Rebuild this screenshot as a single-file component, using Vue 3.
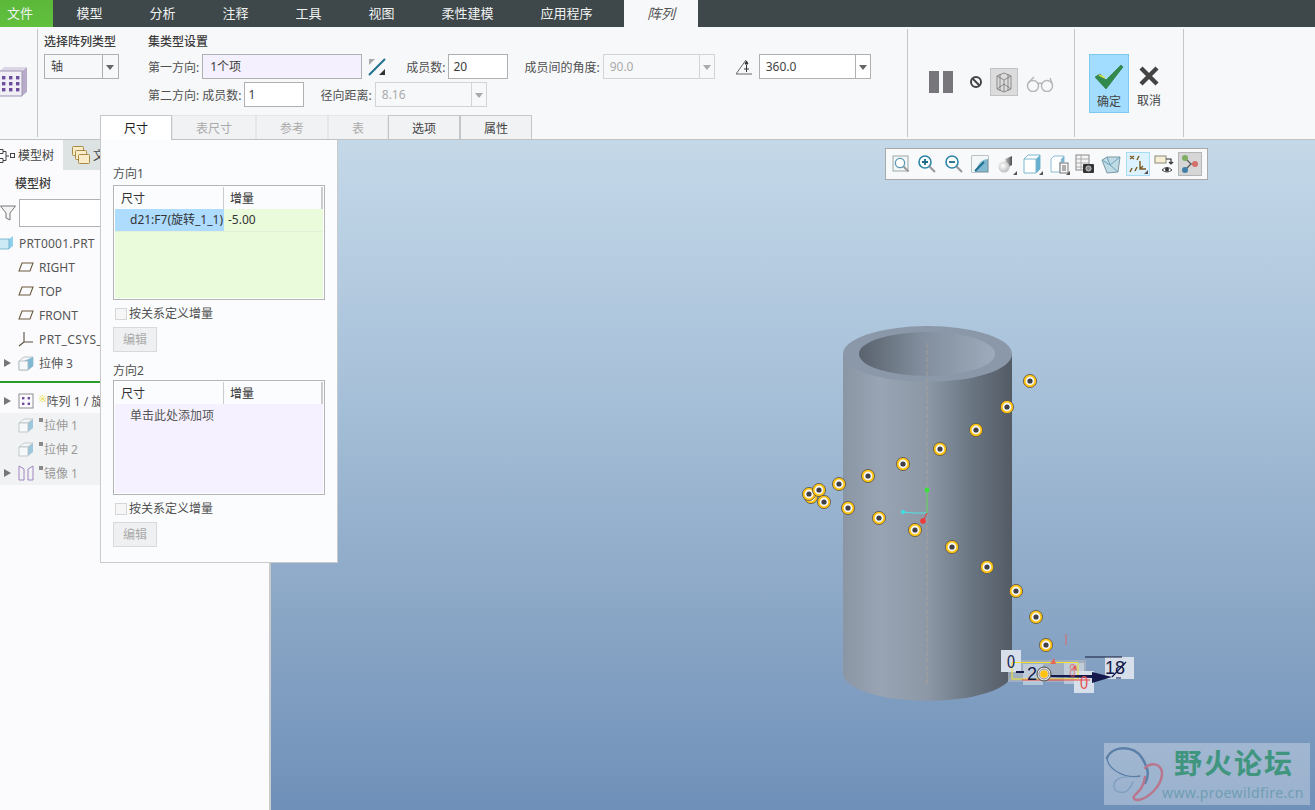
<script setup>
const tabs = ['模型', '分析', '注释', '工具', '视图', '柔性建模', '应用程序']

const panelTabs = [
  { name: '尺寸', active: true, w: 72 },
  { name: '表尺寸', off: true, w: 84 },
  { name: '参考', off: true, w: 72 },
  { name: '表', off: true, w: 60 },
  { name: '选项', w: 72 },
  { name: '属性', w: 72 },
]

const treeTop = [
  { text: 'RIGHT', icon: 'plane' },
  { text: 'TOP', icon: 'plane' },
  { text: 'FRONT', icon: 'plane' },
  { text: 'PRT_CSYS_DEF', icon: 'csys', wide: true },
  { text: '拉伸 3', icon: 'cube', arrow: true },
]

const treeBottom = [
  { text: '拉伸 1', icon: 'cube', mark: true },
  { text: '拉伸 2', icon: 'cube', mark: true },
  { text: '镜像 1', icon: 'mirror', mark: true, arrow: true },
]

// 阵列成员在视图里的位置
const dots = [
  [811, 497], [809, 494], [819, 490], [824, 502], [839, 484], [848, 508], [868, 476],
  [879, 518], [903, 464], [915, 530], [940, 449], [952, 547], [976, 430], [987, 567],
  [1007, 407], [1016, 591], [1030, 381], [1036, 617], [1046, 645],
]
</script>

<template>
  <div class="app">
    <nav class="topbar">
      <div class="tab-file">文件</div>
      <div v-for="t in tabs" :key="t" class="tab">{{ t }}</div>
      <div class="tab-active">阵列</div>
    </nav>

    <section class="ribbon">
      <div class="g-icon">
        <svg width="28" height="32" viewBox="0 0 28 32">
          <path d="M22 5L27 1V26L22 30Z" fill="#b7abc9" />
          <path d="M0 5L4 1H27L22 5Z" fill="#dcd7e6" />
          <path d="M0 5H22V30H0" fill="#f1eff6" stroke="#9d93b0" />
          <g fill="#6d4d9c">
            <rect x="2" y="10" width="3.4" height="3.4" /><rect x="9" y="10" width="3.4" height="3.4" /><rect x="16" y="10" width="3.4" height="3.4" />
            <rect x="2" y="16" width="3.4" height="3.4" /><rect x="9" y="16" width="3.4" height="3.4" /><rect x="16" y="16" width="3.4" height="3.4" />
            <rect x="2" y="22" width="3.4" height="3.4" /><rect x="9" y="22" width="3.4" height="3.4" /><rect x="16" y="22" width="3.4" height="3.4" />
          </g>
        </svg>
      </div>

      <div class="ribbon-main">
        <div class="fields">
          <div class="g-type">
            <div class="g-title">选择阵列类型</div>
            <div class="select sel-type">
              <span class="sel-val">轴</span>
              <span class="sel-arrow"></span>
            </div>
          </div>
          <div class="g-set">
            <div class="g-title">集类型设置</div>
            <div class="row">
              <label class="lbl">第一方向:</label>
              <div class="input in-first">1个项</div>
              <svg class="flip" width="18" height="20" viewBox="0 0 18 20">
                <path d="M1 18L17 2" stroke="#1f6f8f" stroke-width="2" fill="none" />
                <path d="M1 2H7L1 8Z" fill="#a9a9a9" />
                <path d="M17 18H11L17 12Z" fill="#333" />
              </svg>
              <label class="lbl lbl-count">成员数:</label>
              <div class="input in-num">20</div>
              <label class="lbl lbl-ang">成员间的角度:</label>
              <div class="select sel-ang off">
                <span class="sel-val">90.0</span>
                <span class="sel-arrow"></span>
              </div>
              <svg class="ang-icon" width="18" height="20" viewBox="0 0 18 20">
                <path d="M0 17H16M0 17L10 3" stroke="#666" fill="none" />
                <path d="M9 7L12 7L10.5 4Z M10.500 8V15M8 12H13" stroke="#333" fill="#333" stroke-width="1" />
              </svg>
              <div class="select sel-360">
                <span class="sel-val">360.0</span>
                <span class="sel-arrow"></span>
              </div>
            </div>
            <div class="row row2">
              <label class="lbl">第二方向: 成员数:</label>
              <div class="input in-num second-num">1</div>
              <label class="lbl lbl-rad">径向距离:</label>
              <div class="select sel-ang off">
                <span class="sel-val">8.16</span>
                <span class="sel-arrow"></span>
              </div>
            </div>
          </div>
        </div>
        <div class="ptabs">
          <div
            v-for="p in panelTabs"
            :key="p.name"
            class="ptab"
            :class="{ active: p.active, off: p.off }"
            :style="{ width: p.w + 'px' }"
          >{{ p.name }}</div>
        </div>
      </div>

      <div class="g-view">
        <svg width="24" height="22" viewBox="0 0 24 22">
          <rect x="0" y="0" width="10" height="22" fill="#77777b" />
          <rect x="14" y="0" width="10" height="22" fill="#77777b" />
        </svg>
        <svg class="no-icon" width="14" height="14" viewBox="0 0 14 14">
          <circle cx="7" cy="7" r="5" fill="none" stroke="#444" stroke-width="2" />
          <path d="M3.5 3.5L10.5 10.5" stroke="#444" stroke-width="2" />
        </svg>
        <div class="wire-btn">
          <svg width="22" height="22" viewBox="0 0 22 22">
            <g fill="none" stroke="#777" stroke-width="0.8">
              <path d="M4 5L11 2L18 5V18L11 21L4 18Z" />
              <path d="M4 5L11 9L18 5M11 9V21M4 18L11 13L18 18M7 3V20M15 3V20" />
            </g>
          </svg>
        </div>
        <svg class="glasses" width="28" height="16" viewBox="0 0 28 16">
          <g fill="none" stroke="#b5b5b5" stroke-width="1.4">
            <circle cx="7" cy="10" r="5.5" />
            <circle cx="21" cy="10" r="5.5" />
            <path d="M12 8Q14 6 16 8M2 7L8 1M26 7L24 2" />
          </g>
        </svg>
      </div>

      <div class="g-ok">
        <div class="ok-btn">
          <svg width="30" height="26" viewBox="0 0 30 26">
            <path d="M1 13L6 10L12 16L27 1L29 3L12 25Z" fill="#2f8a4c" stroke="#2e6b33" stroke-width="0.6" />
            <path d="M5 11L11 14" stroke="#d6e04a" stroke-width="1.4" />
          </svg>
          <span>确定</span>
        </div>
        <div class="cancel-btn">
          <svg width="20" height="20" viewBox="0 0 20 20">
            <path d="M2 2L18 18M18 2L2 18" stroke="#444" stroke-width="4.4" />
          </svg>
          <span>取消</span>
        </div>
      </div>
    </section>

    <div class="work">
      <aside class="side">
        <div class="side-tabs">
          <div class="side-tab">
            <svg width="16" height="16" viewBox="0 0 16 16">
              <g fill="none" stroke="#444">
                <path d="M-2 2.5H3V6.5H-2M-2 11.5H3V15.5H-2M3 4.500H6V13.500H3M6 9H9" />
                <rect x="10.5" y="6.5" width="4" height="4" />
              </g>
            </svg>
            <span>模型树</span>
          </div>
          <div class="side-tab2">
            <svg width="20" height="20" viewBox="0 0 20 20">
              <g stroke="#a98a45" fill="#f8edc8">
                <rect x="1.5" y="1.5" width="11" height="9" rx="1" />
                <rect x="4.5" y="5.5" width="11" height="9" rx="1" />
                <rect x="7.5" y="9.5" width="11" height="9" rx="1" />
              </g>
            </svg>
            <span>文件夹浏览器</span>
          </div>
        </div>
        <div class="side-title">模型树</div>
        <div class="filter">
          <svg width="16" height="16" viewBox="0 0 16 16">
            <path d="M0.5 1H15.5L10 8V15L6 13V8Z" fill="#f3f3f3" stroke="#777" />
          </svg>
          <div class="filter-in"></div>
        </div>

        <div class="root-row">
          <svg width="13" height="14" viewBox="0 0 13 14">
            <path d="M0 3H9L13 0V10L9 13H0Z" fill="#8fd0ea" />
            <path d="M0 3H9V13H0Z" fill="#cbeaf6" />
            <path d="M0 3H9V13H0" fill="none" stroke="#5aa3c4" stroke-width="0.7" />
          </svg>
          <span>PRT0001.PRT</span>
        </div>

        <div v-for="r in treeTop" :key="r.text" class="t-row" :class="{ wide: r.wide }">
          <span class="t-arrow" :class="{ on: r.arrow }"></span>
          <svg class="t-icon" width="16" height="16" viewBox="0 0 16 16">
            <path v-if="r.icon === 'plane'" d="M4 4H15L12 12H1Z" fill="none" stroke="#6d5a3f" stroke-width="1.1" />
            <path v-if="r.icon === 'csys'" d="M6 1V11H15M6 11L1 15" fill="none" stroke="#5b5040" stroke-width="1.1" />
            <template v-if="r.icon === 'cube'">
              <path d="M1 6L6 2H15V11L10 15H1Z" fill="#f6f8f9" stroke="#a9b5bb" stroke-width="0.8" />
              <path d="M6 6L15 2V11L10 15V6Z" fill="#7fb9d6" />
              <path d="M1 6H10V15H1Z" fill="#f6f8f9" stroke="#a9b5bb" stroke-width="0.8" />
            </template>
          </svg>
          <span>{{ r.text }}</span>
        </div>

        <div class="insert-line"></div>

        <div class="t-row">
          <span class="t-arrow on"></span>
          <svg class="t-icon" width="16" height="16" viewBox="0 0 16 16">
            <rect x="1" y="1" width="14" height="14" fill="#fbfbfd" stroke="#8c8c94" />
            <g fill="#6d4d9c">
              <rect x="4" y="4" width="2.4" height="2.4" /><rect x="9.6" y="4" width="2.4" height="2.4" />
              <rect x="4" y="9.6" width="2.4" height="2.4" /><rect x="9.6" y="9.6" width="2.4" height="2.4" />
            </g>
          </svg>
          <span class="star">※</span><span>阵列 1 / 旋转 1</span>
        </div>

        <div class="t-group">
          <div v-for="r in treeBottom" :key="r.text" class="t-row muted">
            <span class="t-arrow" :class="{ on: r.arrow }"></span>
            <svg class="t-icon" width="16" height="16" viewBox="0 0 16 16">
              <template v-if="r.icon === 'cube'">
                <path d="M6 6L15 2V11L10 15V6Z" fill="#9cc7dc" />
                <path d="M1 6L6 2H15L10 6Z" fill="#f2f5f6" stroke="#b6bfc4" stroke-width="0.7" />
                <path d="M1 6H10V15H1Z" fill="#f6f8f9" stroke="#b6bfc4" stroke-width="0.8" />
              </template>
              <path v-if="r.icon === 'mirror'" d="M1 1L6 4V15H1ZM15 1L10 4V15H15Z" fill="none" stroke="#a184c0" stroke-width="1" />
            </svg>
            <span class="mark"></span><span>{{ r.text }}</span>
          </div>
        </div>
      </aside>

      <main class="view">
        <svg class="scene" width="1044" height="670" viewBox="271 140 1044 670">
          <defs>
            <linearGradient id="cyl" x1="0" x2="1" y1="0" y2="0">
              <stop offset="0" stop-color="#8b96a5" />
              <stop offset="0.22" stop-color="#98a3b3" />
              <stop offset="0.5" stop-color="#8d98a7" />
              <stop offset="0.78" stop-color="#687380" />
              <stop offset="1" stop-color="#535b65" />
            </linearGradient>
            <linearGradient id="hole" x1="0" x2="1" y1="0" y2="0">
              <stop offset="0" stop-color="#59626d" />
              <stop offset="0.45" stop-color="#818d9c" />
              <stop offset="1" stop-color="#9dabbc" />
            </linearGradient>
          </defs>

          <path d="M843 354V673A84.5 28 0 0 0 1012 673V354Z" fill="url(#cyl)" />
          <ellipse cx="927.5" cy="354" rx="84.5" ry="28" fill="#8b98a9" />
          <ellipse cx="927" cy="354" rx="68" ry="22" fill="url(#hole)" />
          <path d="M927 343V685" stroke="#c9b08a" stroke-width="1" stroke-dasharray="5 2" opacity="0.4" />

          <path d="M903 512L914 513H927" fill="none" stroke="#4fe3e3" stroke-width="1" />
          <path d="M927 513V490" stroke="#58d858" stroke-width="1" />
          <path d="M927 513L923 521" stroke="#e33" stroke-width="1" />
          <circle cx="927" cy="490" r="2.4" fill="#3ce03c" />
          <circle cx="903" cy="512" r="2" fill="#35e5e5" />
          <circle cx="923" cy="521" r="2.8" fill="#f03a3a" />

          <g v-for="(d, i) in dots" :key="i">
            <circle :cx="d[0]" :cy="d[1]" r="6.6" fill="#ffc20e" stroke="#555" stroke-width="0.8" />
            <circle :cx="d[0]" :cy="d[1]" r="4.4" fill="#f7f7f7" />
            <circle :cx="d[0]" :cy="d[1]" r="2.6" fill="#3f3f45" />
          </g>

          <!-- 拖动手柄和尺寸 -->
          <rect x="1008" y="660" width="78" height="22" fill="#a7b1bf" opacity="0.85" />
          <rect x="1001" y="650" width="20" height="22" fill="#d6dfea" />
          <rect x="1023" y="664" width="20" height="21" fill="#d6dfea" opacity="0.6" />
          <rect x="1064" y="663" width="20" height="21" fill="#d6dfea" opacity="0.6" />
          <rect x="1074" y="671" width="20" height="22" fill="#d6dfea" />
          <rect x="1105" y="657" width="29" height="22" fill="#d6dfea" />
          <path d="M1066 634V645" stroke="#d96a6a" stroke-width="1" />
          <path d="M1085 657H1122" stroke="#111a3c" stroke-width="1" />
          <path d="M1012 662.5H1078V679H1012Z" fill="none" stroke="#f3e52a" stroke-width="1" />
          <path d="M1022 680H1090" stroke="#f04040" stroke-width="1" />
          <path d="M1050 675H1092V672L1112 677L1092 683V678L1050 677Z" fill="#14184a" />
          <path d="M1112 677L1126 662M1116 678H1121" stroke="#14184a" stroke-width="1.2" />
          <path d="M1016 672H1024" stroke="#14184a" stroke-width="2" />
          <path d="M1050 664L1054 658L1056 664Z M1072 668L1076 665L1077 671Z" fill="#e06a5a" />
          <text x="1007" y="668" class="dim" textLength="8" lengthAdjust="spacingAndGlyphs">0</text>
          <text x="1027" y="680" class="dim">2</text>
          <text x="1069" y="677" class="dim red faint" textLength="7" lengthAdjust="spacingAndGlyphs">8</text>
          <text x="1080" y="689" class="dim red" textLength="8" lengthAdjust="spacingAndGlyphs">0</text>
          <text x="1105" y="674" class="dim">18</text>
          <circle cx="1044" cy="674" r="7" fill="#e8e8e8" stroke="#444" stroke-width="1" />
          <circle cx="1044" cy="674" r="5" fill="none" stroke="#777" stroke-width="0.8" />
          <circle cx="1044" cy="674" r="3.8" fill="#ffc20e" />
        </svg>

        <div class="float-bar">
          <div class="fb">
            <svg width="20" height="20" viewBox="0 0 20 20">
              <rect x="2" y="2" width="15" height="15" fill="#f3f5f6" stroke="#9aa" />
              <circle cx="9" cy="9" r="4.6" fill="#fff" stroke="#5b9ab5" stroke-width="1.3" />
              <path d="M12.5 12.5L17.5 17.5" stroke="#999" stroke-width="2" />
            </svg>
          </div>
          <div class="fb">
            <svg width="20" height="20" viewBox="0 0 20 20">
              <circle cx="8" cy="8" r="6" fill="#fff" stroke="#2f85a8" stroke-width="1.6" />
              <path d="M5 8H11M8 5V11" stroke="#1d6a8a" stroke-width="1.8" />
              <path d="M12.5 12.5L18 18" stroke="#9a9a9a" stroke-width="2.2" />
            </svg>
          </div>
          <div class="fb">
            <svg width="20" height="20" viewBox="0 0 20 20">
              <circle cx="8" cy="8" r="6" fill="#fff" stroke="#2f85a8" stroke-width="1.6" />
              <path d="M5 8H11" stroke="#1d6a8a" stroke-width="1.8" />
              <path d="M12.5 12.5L18 18" stroke="#9a9a9a" stroke-width="2.2" />
            </svg>
          </div>
          <div class="fb">
            <svg width="20" height="20" viewBox="0 0 20 20">
              <rect x="2" y="2" width="16" height="16" fill="#7fb9d2" stroke="#7a8a92" />
              <path d="M2 2H18V5Q9 5 5 18H2Z" fill="#f4f7f8" />
              <path d="M5 17L14 8" stroke="#1f6f8f" stroke-width="2" />
            </svg>
          </div>
          <div class="fb corner">
            <svg width="20" height="20" viewBox="0 0 20 20">
              <defs>
                <radialGradient id="ball" cx="0.4" cy="0.4" r="0.7">
                  <stop offset="0" stop-color="#fff" />
                  <stop offset="1" stop-color="#b5b5b5" />
                </radialGradient>
                <linearGradient id="post" x1="0" x2="1" y1="0" y2="0">
                  <stop offset="0" stop-color="#c8c8c8" />
                  <stop offset="1" stop-color="#4e4e4e" />
                </linearGradient>
              </defs>
              <path d="M9 5L16 2V11L11 14Z" fill="url(#post)" />
              <circle cx="8" cy="13" r="5.5" fill="url(#ball)" />
            </svg>
          </div>
          <div class="fb corner">
            <svg width="20" height="20" viewBox="0 0 20 20">
              <path d="M2 5L6 1H18V15L14 19H2Z" fill="#fff" stroke="#7db6d0" />
              <path d="M14 5L18 1V15L14 19Z" fill="#68aecd" />
              <path d="M2 5H14V19" fill="none" stroke="#7db6d0" />
            </svg>
          </div>
          <div class="fb corner">
            <svg width="20" height="20" viewBox="0 0 20 20">
              <path d="M2 5L5 2H15V8H11V18H2Z" fill="#fff" stroke="#8cbcd2" />
              <path d="M12 5L15 2V8H12Z" fill="#7db6d0" />
              <rect x="11" y="9" width="8" height="10" fill="#f7f7f7" stroke="#777" />
              <path d="M13 12H17M13 14H17M13 16H17" stroke="#666" />
            </svg>
          </div>
          <div class="fb">
            <svg width="20" height="20" viewBox="0 0 20 20">
              <rect x="1" y="1" width="13" height="15" fill="#f5f5f5" stroke="#888" />
              <path d="M1 5H14M1 9H14M1 13H9M6 1V16" stroke="#aaa" />
              <rect x="8" y="10" width="11" height="9" rx="1" fill="#333" />
              <circle cx="13.5" cy="14.500" r="2.6" fill="#888" stroke="#eee" stroke-width="0.7" />
            </svg>
          </div>
          <div class="fb">
            <svg width="20" height="20" viewBox="0 0 20 20">
              <path d="M1 6L6 3H19L17 18L6 19Z" fill="#bfdbe6" stroke="#7f9aa6" />
              <path d="M6 3L9 11L17 18M9 11L19 3M9 11L1 6" stroke="#6fa2b8" fill="none" />
            </svg>
          </div>
          <div class="fb sel corner">
            <svg width="20" height="20" viewBox="0 0 20 20">
              <g stroke="#7a5a1f" stroke-width="1.4" fill="none">
                <path d="M2 2L6 5M6 2L2 5M11 2L9 6M9 13L7 17M4 14L2 18M12 7V15H18M12 15L15 12" />
              </g>
            </svg>
          </div>
          <div class="fb">
            <svg width="20" height="20" viewBox="0 0 20 20">
              <rect x="1" y="2" width="11" height="7" fill="#f6efd6" stroke="#8a8a7a" />
              <path d="M12 5H17V10M15 8L17 10L19 8" stroke="#333" fill="none" stroke-width="1.2" />
              <path d="M8 16Q13 11 18 16Q13 20 8 16Z" fill="#fff" stroke="#444" />
              <circle cx="13" cy="15.6" r="2" fill="#333" />
            </svg>
          </div>
          <div class="fb dark">
            <svg width="20" height="20" viewBox="0 0 20 20">
              <path d="M5 4L11 10L5 16M11 10H15" stroke="#555" fill="none" stroke-width="1.2" />
              <circle cx="5" cy="4" r="3" fill="#7fae62" />
              <circle cx="15" cy="10" r="3" fill="#d4716b" />
              <circle cx="5" cy="16" r="3" fill="#3f7fa8" />
            </svg>
          </div>
        </div>

        <div class="mark-logo">
          <svg width="60" height="62" viewBox="0 0 60 62">
            <g fill="none" stroke-linecap="round">
              <path d="M3 15C8 2 30 2 38 15C44 25 46 32 41 40" stroke="#5b7fa8" stroke-width="2.4" />
              <path d="M3 15C4 26 20 36 36 33" stroke="#5b7fa8" stroke-width="1.3" />
              <path d="M41 25C47 19 56 20 58 29C59 42 44 56 34 57C29 57 29 54 31 52C36 48 40 42 41 34" stroke="#b9768c" stroke-width="2.4" />
              <path d="M24 34C15 33 9 38 10 44C11 50 20 51 24 47C27 44 28 42 29 39" stroke="#7f9fc0" stroke-width="1.4" />
            </g>
          </svg>
          <div class="logo-txt">
            <div class="logo-cn">野火论坛</div>
            <div class="logo-url">www.proewildfire.cn</div>
          </div>
        </div>
      </main>

      <!-- 尺寸下滑面板 -->
      <div class="panel">
        <div class="p-label">方向1</div>
        <div class="tbl">
          <div class="tbl-head"><span>尺寸</span><span>增量</span></div>
          <div class="tbl-body green">
            <div class="tbl-row">
              <span class="cell-a">d21:F7(旋转_1_1)</span>
              <span class="cell-b">-5.00</span>
            </div>
          </div>
        </div>
        <div class="chk"><i></i>按关系定义增量</div>
        <div class="p-btn">编辑</div>

        <div class="p-label second">方向2</div>
        <div class="tbl tbl-second">
          <div class="tbl-head"><span>尺寸</span><span>增量</span></div>
          <div class="tbl-body violet">
            <div class="add-hint">单击此处添加项</div>
          </div>
        </div>
        <div class="chk"><i></i>按关系定义增量</div>
        <div class="p-btn">编辑</div>
      </div>
    </div>
  </div>
</template>

<style scoped>
.app {
  width: 1315px;
  height: 810px;
  display: flex;
  flex-direction: column;
  overflow: hidden;
  font-family: "Noto Sans", "Noto Sans CJK SC", sans-serif;
  font-size: 12px;
  color: #444;
  background: #f7f8fa;
}

/* 顶部选项卡 */
.topbar {
  height: 27px;
  flex: none;
  display: flex;
  background: #3e4749;
  color: #f0f2f2;
  font-size: 13px;
  line-height: 27px;
}
.tab-file {
  width: 53px;
  box-sizing: border-box;
  padding-left: 7px;
  background: linear-gradient(#5bb83a, #62c03e);
}
.tab {
  padding: 0 23.5px;
}
.tab-active {
  width: 74px;
  margin-left: 8px;
  text-align: center;
  background: #f7f8fa;
  color: #555;
  font-size: 14px;
  font-style: italic;
}

/* 功能区 */
.ribbon {
  height: 113px;
  flex: none;
  display: flex;
  box-sizing: border-box;
  background: #f7f8fa;
  border-bottom: 1px solid #bfc3c6;
}
.g-icon {
  width: 37px;
  height: 71px;
  margin-top: 2px;
  flex: none;
  padding-top: 37px;
  border-right: 1px solid #c4c7ca;
}
.g-icon svg {
  display: block;
}
.ribbon-main {
  width: 869px;
  flex: none;
  display: flex;
  flex-direction: column;
  justify-content: space-between;
  margin-top: 2px;
}
.fields {
  display: flex;
}
.g-type {
  width: 104px;
  margin-left: 6px;
  flex: none;
}
.g-title {
  margin-top: 5px;
  margin-bottom: 4px;
  height: 16px;
  line-height: 16px;
  font-weight: 500;
  color: #3c3c3c;
}
.row {
  height: 25px;
  display: flex;
  align-items: center;
}
.row2 {
  margin-top: 3px;
}
.lbl {
  white-space: nowrap;
  color: #505050;
}
.select {
  height: 25px;
  box-sizing: border-box;
  display: flex;
  background: #fff;
  border: 1px solid #aeb0b2;
  line-height: 23px;
}
.sel-val {
  flex: 1;
  padding-left: 6px;
}
.sel-arrow {
  width: 14px;
  flex: none;
  border-left: 1px solid #aeb0b2;
  position: relative;
}
.sel-arrow::after {
  content: "";
  position: absolute;
  left: 3px;
  top: 10px;
  border-left: 4px solid transparent;
  border-right: 4px solid transparent;
  border-top: 5px solid #666;
}
.sel-type {
  width: 75px;
  background: #f7f8fa;
}
.sel-type .sel-arrow {
  width: 15px;
}
.select.off {
  border-color: #d2d4d6;
  color: #aaa;
  background: #f7f8fa;
}
.select.off .sel-arrow {
  border-color: #d2d4d6;
}
.select.off .sel-arrow::after {
  border-top-color: #aaa;
}
.input {
  height: 25px;
  box-sizing: border-box;
  border: 1px solid #aeb0b2;
  background: #fff;
  line-height: 23px;
  padding-left: 4px;
  color: #3c3c3c;
}
.in-first {
  width: 160px;
  margin-left: 3px;
  padding-left: 7px;
  background: #f4f0fd;
}
.flip {
  margin-left: 6px;
}
.lbl-count {
  margin-left: 20px;
}
.in-num {
  width: 60px;
  margin-left: 3px;
}
.in-num.second-num {
  margin-left: 2px;
}
.lbl-ang {
  margin-left: 16px;
}
.sel-ang {
  width: 112px;
  margin-left: 3px;
}
.ang-icon {
  margin-left: 21px;
}
.sel-360 {
  width: 112px;
  margin-left: 5px;
}
.lbl-rad {
  margin-left: 17px;
}
.ptabs {
  display: flex;
  margin-left: 62px;
  height: 24px;
}
.ptab {
  box-sizing: border-box;
  text-align: center;
  line-height: 25px;
  background: #f1f2f4;
  border: 1px solid #c4c7ca;
  border-bottom: none;
  color: #444;
}
.ptab.off {
  color: #aaa;
  border-color: #e4e6e8;
}
.ptab.active {
  background: #fff;
  color: #222;
  height: 25px;
  position: relative;
  z-index: 1;
}
.g-view {
  width: 167px;
  height: 108px;
  margin-top: 2px;
  flex: none;
  display: flex;
  align-items: center;
  padding-left: 21px;
  padding-bottom: 2px;
  box-sizing: border-box;
  border-left: 1px solid #c4c7ca;
}
.no-icon {
  margin-left: 16px;
}
.wire-btn {
  width: 28px;
  height: 28px;
  margin-left: 7px;
  display: flex;
  align-items: center;
  justify-content: center;
  background: #dcdcdc;
  border: 1px solid #c2c2c2;
  box-sizing: border-box;
}
.glasses {
  margin-left: 8px;
  margin-top: 4px;
}
.g-ok {
  width: 110px;
  height: 108px;
  margin-top: 2px;
  flex: none;
  box-sizing: border-box;
  display: flex;
  padding: 25px 0 0 14px;
  border-left: 1px solid #c4c7ca;
  border-right: 1px solid #c4c7ca;
}
.ok-btn,
.cancel-btn {
  width: 40px;
  height: 59px;
  box-sizing: border-box;
  display: flex;
  flex-direction: column;
  align-items: center;
}
.ok-btn {
  background: #a2dcff;
  border: 1px solid #7cc8ee;
  padding-top: 9px;
}
.ok-btn span {
  margin-top: 4px;
  line-height: 16px;
}
.cancel-btn {
  padding-top: 12px;
}
.cancel-btn span {
  margin-top: 7px;
  line-height: 16px;
}

/* 下方工作区 */
.work {
  flex: 1;
  display: flex;
  position: relative;
  min-height: 0;
}
.side {
  width: 271px;
  flex: none;
  box-sizing: border-box;
  background: #fbfbfd;
  border-right: 2px solid #c8cacc;
}
.side-tabs {
  display: flex;
  height: 30px;
}
.side-tab {
  width: 63px;
  flex: none;
  display: flex;
  align-items: center;
  gap: 2px;
}
.side-tab2 {
  flex: 1;
  display: flex;
  align-items: center;
  padding-left: 8px;
  gap: 2px;
  background: #dde2e2;
  white-space: nowrap;
}
.side-title {
  height: 28px;
  line-height: 28px;
  padding-left: 15px;
  font-weight: 500;
  color: #3c3c3c;
}
.filter {
  display: flex;
  align-items: center;
  gap: 3px;
  height: 29px;
}
.filter-in {
  width: 240px;
  height: 28px;
  box-sizing: border-box;
  background: #fff;
  border: 1px solid #aeb0b2;
}
.root-row {
  height: 24px;
  margin-top: 4px;
  display: flex;
  align-items: center;
  gap: 6px;
  color: #555;
  letter-spacing: 0.2px;
}
.t-row {
  height: 24px;
  display: flex;
  align-items: center;
  white-space: nowrap;
  color: #555;
}
.t-row.wide {
  letter-spacing: 0.4px;
}
.t-arrow {
  width: 18px;
  flex: none;
  padding-left: 4px;
  box-sizing: border-box;
}
.t-arrow.on::before {
  content: "";
  display: block;
  width: 0;
  border-left: 7px solid #777;
  border-top: 4.5px solid transparent;
  border-bottom: 4.5px solid transparent;
}
.t-icon {
  flex: none;
  margin-right: 5px;
}
.insert-line {
  height: 2px;
  margin-top: 6px;
  margin-bottom: 6px;
  background: #2a9a2a;
}
.star {
  color: #e2d400;
  font-size: 9px;
  margin-top: -6px;
}
.t-group {
  background: #f1f2f3;
}
.muted {
  color: #9a9a9a;
}
.mark {
  width: 4px;
  height: 4px;
  margin-right: 1px;
  margin-top: -10px;
  background: #888;
}

/* 图形窗口 */
.view {
  flex: 1;
  position: relative;
  overflow: hidden;
  background: linear-gradient(#c4d8e8 0%, #a9c2da 35%, #8ba7c6 70%, #6f90b9 100%);
}
.scene {
  position: absolute;
  left: 0;
  top: 0;
}
.dim {
  font-family: "Liberation Sans", sans-serif;
  font-size: 18px;
  fill: #14184a;
}
.dim.red {
  fill: #e65050;
}
.dim.faint {
  fill-opacity: 0.6;
}
.float-bar {
  position: absolute;
  left: 614px;
  top: 8px;
  width: 323px;
  height: 32px;
  box-sizing: border-box;
  display: flex;
  align-items: center;
  gap: 2.3px;
  padding-left: 3px;
  background: #f8f9fb;
  border: 1px solid #a8a9ab;
}
.fb {
  width: 24px;
  height: 24px;
  flex: none;
  box-sizing: border-box;
  display: flex;
  align-items: center;
  justify-content: center;
  position: relative;
}
.fb.corner::after {
  content: "";
  position: absolute;
  right: 1px;
  bottom: 1px;
  border-left: 4px solid transparent;
  border-bottom: 4px solid #555;
}
.fb.sel {
  background: #ddf2ff;
  border: 1px solid #a8dcf5;
}
.fb.dark {
  background: #d6d6d6;
  border: 1px solid #b5b5b5;
}
.mark-logo {
  position: absolute;
  right: 5px;
  bottom: 5px;
  width: 206px;
  height: 62px;
  display: flex;
  background: rgba(255, 255, 255, 0.3);
}
.logo-txt {
  margin-left: -2px;
}
.logo-cn {
  margin: 5px 0 0 12px;
  height: 30px;
  line-height: 30px;
  font-size: 28px;
  font-weight: 700;
  letter-spacing: 2px;
  color: #40957f;
  white-space: nowrap;
}
.logo-url {
  margin-top: 6px;
  line-height: 18px;
  font-size: 14px;
  letter-spacing: 0.4px;
  color: #6f9db2;
  white-space: nowrap;
}

/* 尺寸面板 */
.panel {
  position: absolute;
  left: 100px;
  top: 0;
  width: 238px;
  height: 423px;
  box-sizing: border-box;
  padding: 25px 12px 0 12px;
  background: #fbfcfe;
  border: 1px solid #c8cacc;
  border-top: none;
}
.p-label {
  height: 18px;
  line-height: 18px;
  color: #505050;
}
.p-label.second {
  margin-top: 10px;
}
.tbl {
  width: 212px;
  height: 115px;
  box-sizing: border-box;
  margin-top: 2px;
  padding: 1px;
  border: 1px solid #b2b4b6;
  background: #fff;
  display: flex;
  flex-direction: column;
}
.tbl-second {
  margin-top: 0;
}
.tbl-head {
  height: 22px;
  flex: none;
  display: flex;
  line-height: 24px;
  color: #333;
  background: #fbfcfe;
  border-right: 2px solid #ccc;
}
.tbl-head span:first-child {
  width: 109px;
  padding-left: 6px;
  box-sizing: border-box;
  border-right: 1px solid #ccc;
}
.tbl-head span:last-child {
  padding-left: 6px;
}
.tbl-body {
  flex: 1;
}
.green {
  background: #eafbdc;
}
.violet {
  background: #f5f1fe;
}
.tbl-row {
  height: 22px;
  display: flex;
  line-height: 22px;
  border-bottom: 1px solid #e4f0da;
}
.cell-a {
  width: 109px;
  flex: none;
  padding-left: 15px;
  box-sizing: border-box;
  background: #addcff;
  color: #333;
  white-space: nowrap;
  overflow: hidden;
}
.cell-b {
  padding-left: 4px;
  color: #333;
}
.add-hint {
  padding: 0 0 0 15px;
  line-height: 24px;
  color: #555;
}
.chk {
  height: 14px;
  margin-top: 7px;
  display: flex;
  align-items: center;
  line-height: 14px;
  color: #505050;
}
.chk i {
  width: 12px;
  height: 12px;
  margin: 0 2px;
  box-sizing: border-box;
  background: #f6f6f6;
  border: 1px solid #d6d6d6;
}
.p-btn {
  width: 44px;
  height: 25px;
  box-sizing: border-box;
  margin-top: 6px;
  text-align: center;
  line-height: 23px;
  color: #aaa;
  background: #eef0f1;
  border: 1px solid #d8d9da;
}
</style>
